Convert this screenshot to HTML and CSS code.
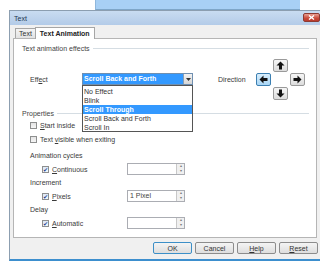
FILE: index.html
```html
<!DOCTYPE html>
<html lang="en">
<head>
    <meta charset="UTF-8">
    <meta name="viewport" content="width=device-width, initial-scale=1.0">
    <title>Text</title>
    <link rel="stylesheet" href="styles.css">
</head>
<body>
    <div class="topstrip">
        <div class="strip-left"></div>
        <div class="strip-blue"></div>
        <div class="strip-right"></div>
    </div>

    <div class="dialog">
        <div class="titlebar">
            <span class="title">Text</span>
            <span class="close">
                <svg width="7" height="5" viewBox="0 0 7 5"><path d="M1 0.5 L6 4.5 M6 0.5 L1 4.5" stroke="#fff" stroke-width="1.4"/></svg>
            </span>
        </div>

        <div class="tabs">
            <span class="tab">Text</span>
            <span class="tab active">Text Animation</span>
        </div>

        <div class="panel">
            <div class="group-head first"><span>Text animation effects</span></div>

            <div class="effect-row">
                <span class="label effect-label">Eff<u>e</u>ct</span>
                <div class="combo">
                    <div class="combo-value">Scroll Back and Forth</div>
                    <div class="combo-btn">
                        <svg width="5" height="3" viewBox="0 0 5 3"><path d="M0 0 H5 L2.5 3 Z" fill="#333"/></svg>
                    </div>
                    <ul class="combo-list">
                        <li>No Effect</li>
                        <li>Blink</li>
                        <li class="selected">Scroll Through</li>
                        <li>Scroll Back and Forth</li>
                        <li>Scroll In</li>
                    </ul>
                </div>
                <span class="label dir-label">Direction</span>
                <div class="arrows">
                    <span></span>
                    <span class="arrow-btn">
                        <svg width="9" height="9" viewBox="0 0 9 9"><path d="M4.5 0.5 L8.5 4.5 H6 V8.5 H3 V4.5 H0.5 Z" fill="#111"/></svg>
                    </span>
                    <span></span>
                    <span class="arrow-btn on">
                        <svg width="9" height="9" viewBox="0 0 9 9"><path d="M0.5 4.5 L4.5 0.5 V3 H8.5 V6 H4.5 V8.5 Z" fill="#111"/></svg>
                    </span>
                    <span></span>
                    <span class="arrow-btn">
                        <svg width="9" height="9" viewBox="0 0 9 9"><path d="M8.5 4.5 L4.5 0.5 V3 H0.5 V6 H4.5 V8.5 Z" fill="#111"/></svg>
                    </span>
                    <span></span>
                    <span class="arrow-btn">
                        <svg width="9" height="9" viewBox="0 0 9 9"><path d="M4.5 8.5 L8.5 4.5 H6 V0.5 H3 V4.5 H0.5 Z" fill="#111"/></svg>
                    </span>
                    <span></span>
                </div>
            </div>

            <div class="group-head props"><span>Properties</span></div>

            <div class="check-row">
                <span class="box"></span><span class="label"><u>S</u>tart inside</span>
            </div>
            <div class="check-row second">
                <span class="box"></span><span class="label">Text <u>v</u>isible when exiting</span>
            </div>

            <div class="sub-head cycles">Animation cycles</div>
            <div class="spin-row">
                <span class="box checked">&#10004;</span><span class="label check-text"><u>C</u>ontinuous</span>
                <div class="spin"><span class="spin-val"></span><span class="spin-btn">&#9652;<br>&#9662;</span></div>
            </div>

            <div class="sub-head">Increment</div>
            <div class="spin-row">
                <span class="box checked">&#10004;</span><span class="label check-text"><u>P</u>ixels</span>
                <div class="spin"><span class="spin-val">1 Pixel</span><span class="spin-btn">&#9652;<br>&#9662;</span></div>
            </div>

            <div class="sub-head">Delay</div>
            <div class="spin-row">
                <span class="box checked">&#10004;</span><span class="label check-text"><u>A</u>utomatic</span>
                <div class="spin"><span class="spin-val"></span><span class="spin-btn">&#9652;<br>&#9662;</span></div>
            </div>
        </div>

        <div class="footer">
            <button class="btn default">OK</button>
            <button class="btn">Cancel</button>
            <button class="btn"><u>H</u>elp</button>
            <button class="btn"><u>R</u>eset</button>
        </div>
    </div>
</body>
</html>
```

FILE: styles.css
```css
* {
    margin: 0;
    padding: 0;
    box-sizing: border-box;
}

body {
    font-family: 'Liberation Sans', Arial, sans-serif;
    font-size: 7px;
    color: #3a3a3a;
    background: #fff;
    width: 320px;
    height: 264px;
    overflow: hidden;
}

u {
    text-decoration: underline;
}

.topstrip {
    display: flex;
    height: 10px;
}

.strip-left {
    width: 95px;
    background: #fff;
}

.strip-blue {
    width: 205px;
    background: #a8d0f5;
    border-left: 1px solid #8fb7dc;
    border-bottom: 1px solid #7ea6c8;
}

.strip-right {
    flex: 1;
    background: #fff;
}

.dialog {
    margin-left: 9px;
    width: 313px;
    height: 251px;
    background: #f0f0f0;
    border: 1px solid #8c9eb0;
    border-bottom: 2px solid #3d8fce;
    padding-left: 3px;
    display: flex;
    flex-direction: column;
}

.titlebar {
    height: 14px;
    margin-left: -3px;
    background: linear-gradient(#c9dcf1, #b3cbe8);
    display: flex;
    align-items: center;
    justify-content: space-between;
    padding-left: 4px;
    color: #1e3650;
}

.close {
    width: 17px;
    height: 9px;
    margin-right: 1px;
    margin-top: -2px;
    border-radius: 2px;
    border: 1px solid #8d3a32;
    background: linear-gradient(#e8a093, #c94a3a 60%, #b93a2c);
    display: flex;
    align-items: center;
    justify-content: center;
}

.tabs {
    height: 13px;
    display: flex;
    align-items: flex-end;
    padding-left: 2px;
}

.tab {
    height: 10px;
    padding: 0 3px;
    line-height: 9px;
    border: 1px solid #a6a6a6;
    border-bottom: none;
    background: linear-gradient(#f4f4f4, #e2e2e2);
    color: #333;
}

.tab.active {
    height: 12px;
    line-height: 11px;
    background: #fff;
    font-weight: bold;
    color: #222;
    margin-left: -1px;
    margin-bottom: -1px;
    position: relative;
    z-index: 1;
    padding: 0 4px;
}

.panel {
    width: 304px;
    height: 200px;
    background: #fff;
    border: 1px solid #b5b5b5;
    padding: 4px 7px 0 8px;
}

.group-head {
    height: 10px;
    display: flex;
    align-items: center;
    gap: 3px;
    color: #444;
}

.group-head::after {
    content: "";
    flex: 1;
    height: 1px;
    background: #d5dde3;
}

.effect-row {
    height: 42px;
    margin-top: 5px;
    display: flex;
    align-items: center;
}

.effect-label {
    width: 52px;
    margin-left: 8px;
}

.combo {
    width: 111px;
    height: 12px;
    border: 1px solid #6f8fb0;
    display: flex;
    position: relative;
}

.combo-value {
    flex: 1;
    background: #3399ff;
    color: #fff;
    line-height: 10px;
    padding-left: 1px;
    font-weight: bold;
}

.combo-btn {
    width: 9px;
    border-left: 1px solid #8a9eb3;
    background: linear-gradient(#f2f2f2, #d6d6d6);
    display: flex;
    align-items: center;
    justify-content: center;
}

.combo-list {
    list-style: none;
    position: absolute;
    left: -1px;
    top: 11px;
    width: 111px;
    height: 47px;
    background: #fff;
    border: 1px solid #555;
    padding-top: 1px;
    z-index: 2;
}

.combo-list li {
    height: 9px;
    line-height: 9px;
    padding-left: 1px;
    color: #333;
}

.combo-list li.selected {
    background: #3399ff;
    color: #fff;
    font-weight: bold;
}

.dir-label {
    margin-left: 25px;
    width: 38px;
}

.arrows {
    display: grid;
    grid-template-columns: 15px 15px 15px;
    grid-template-rows: 13px 13px 13px;
    gap: 1px 2px;
}

.arrow-btn {
    border: 1px solid #9a9a9a;
    border-radius: 2px;
    background: linear-gradient(#f6f6f6, #dcdcdc);
    display: flex;
    align-items: center;
    justify-content: center;
}

.arrow-btn.on {
    border-color: #3c7fb1;
    background: linear-gradient(#d9eefc, #a9d6f5);
}

.props {
    margin-top: 8px;
}

.check-row {
    height: 10px;
    margin-top: 2px;
    margin-left: 8px;
    display: flex;
    align-items: center;
    gap: 3px;
}

.check-row.second {
    margin-top: 4px;
}

.box {
    width: 7px;
    height: 7px;
    border: 1px solid #8e8f8f;
    background: linear-gradient(#e4e4e4, #f6f6f6);
    font-size: 6px;
    line-height: 6px;
    text-align: center;
    color: #1d3e8a;
}

.box.checked {
    background: linear-gradient(#dbe8f6, #f4f8fc);
}

.sub-head {
    height: 10px;
    line-height: 10px;
    margin-top: 3px;
    margin-left: 8px;
}

.sub-head.cycles {
    margin-top: 7px;
}

.spin-row {
    height: 12px;
    margin-top: 2px;
    margin-left: 20px;
    display: flex;
    align-items: center;
}

.spin-row .box {
    margin-right: 3px;
}

.check-text {
    width: 75px;
}

.spin {
    width: 58px;
    height: 12px;
    border: 1px solid #abadb3;
    display: flex;
    background: #fff;
}

.spin-val {
    flex: 1;
    line-height: 10px;
    padding-left: 2px;
    color: #444;
}

.spin-btn {
    width: 8px;
    border-left: 1px solid #c8c8c8;
    background: #f0f0f0;
    font-size: 4px;
    line-height: 4.5px;
    text-align: center;
    color: #777;
}

.footer {
    flex: 1;
    display: flex;
    align-items: center;
    padding-left: 140px;
    padding-bottom: 1px;
    gap: 3px;
}

.btn {
    width: 39px;
    height: 12px;
    font-family: inherit;
    font-size: 7px;
    color: #333;
    border: 1px solid #8c8c8c;
    border-radius: 2px;
    background: linear-gradient(#f4f4f4, #dedede);
}

.btn.default {
    border-color: #3c8fc7;
}
```
